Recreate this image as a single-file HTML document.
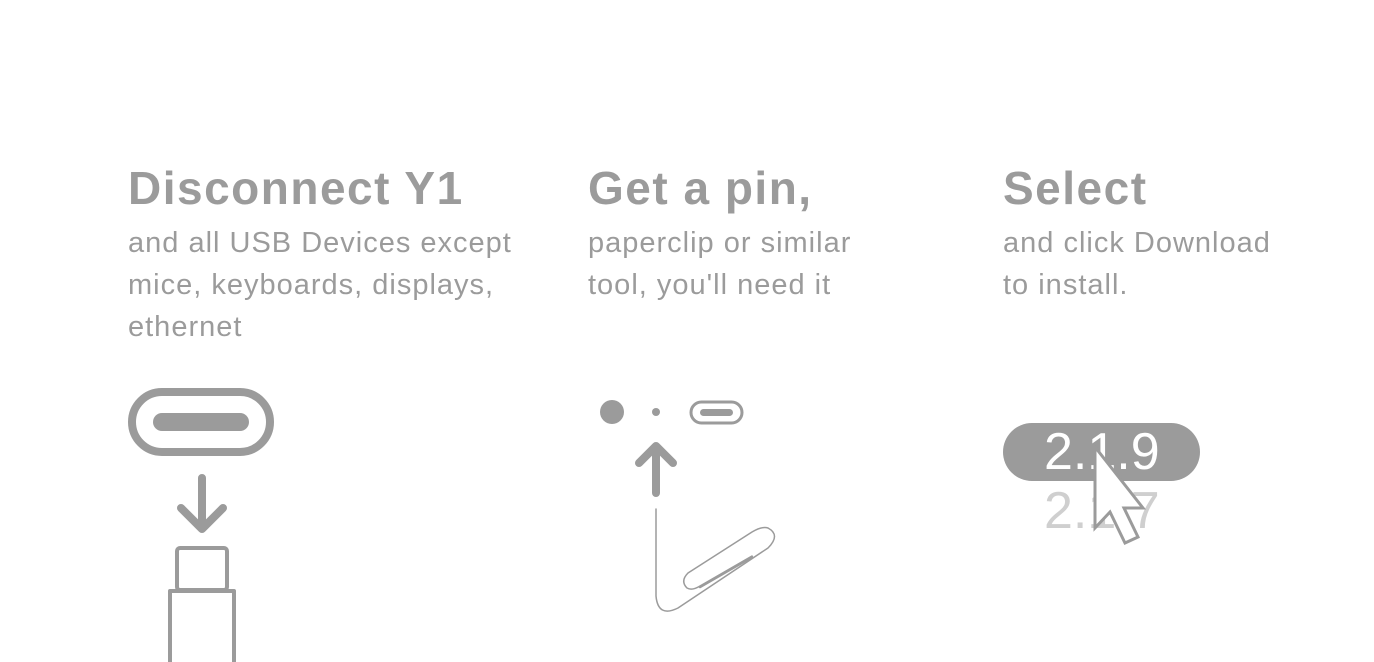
<!DOCTYPE html>
<html><head><style>
html,body{margin:0;padding:0;background:#fff;width:1374px;height:662px;overflow:hidden;font-family:"Liberation Sans",sans-serif;color:#9b9b9b}
.c{position:absolute;top:158px}
h2{margin:0;font-size:46px;font-weight:bold;line-height:60px;letter-spacing:1.5px}
p{margin:0;padding-top:4px;font-size:29px;line-height:42px;letter-spacing:1px}
svg{position:absolute;left:0;top:0}
</style></head><body>
<div class="c" style="left:128px"><h2>Disconnect Y1</h2><p>and all USB Devices except<br>mice, keyboards, displays,<br>ethernet</p></div>
<div class="c" style="left:588px"><h2>Get a pin,</h2><p>paperclip or similar<br>tool, you'll need it</p></div>
<div class="c" style="left:1003px"><h2>Select</h2><p>and click Download<br>to install.</p></div>
<svg width="1374" height="662" viewBox="0 0 1374 662">
<g stroke="#9b9b9b" fill="none" stroke-linecap="round" stroke-linejoin="round">
<rect x="132" y="392" width="138" height="60" rx="30" stroke-width="8"/>
<rect x="153" y="413" width="96" height="18" rx="9" fill="#9b9b9b" stroke="none"/>
<path d="M202 478V528M181 508L202 529L223 508" stroke-width="8"/>
<rect x="177" y="548" width="50" height="42" rx="3" stroke-width="4"/>
<path d="M170 662V591H234V662" stroke-width="4" stroke-linecap="butt"/>
<circle cx="612" cy="412" r="12" fill="#9b9b9b" stroke="none"/>
<circle cx="656" cy="412" r="4" fill="#9b9b9b" stroke="none"/>
<rect x="691" y="402" width="51" height="21" rx="10.5" stroke-width="3"/>
<rect x="700" y="409" width="33" height="7" rx="3.5" fill="#9b9b9b" stroke="none"/>
<path d="M656 493V448M639 463L656 446L673 463" stroke-width="8"/>
<path d="M656 509V596Q658 618 678 608L768 548Q781 535 768 528Q762 526 752 532L688 573Q680 581 687 588Q692 591 700 586L752 556" stroke-width="1.5"/>
<path d="M700 587L752 557" stroke-width="2.5"/>
</g>
<rect x="1003" y="423" width="197" height="58" rx="29" fill="#9b9b9b"/>
<text x="1044" y="469" font-family="Liberation Sans" font-size="52" fill="#fff">2.1.9</text>
<text x="1044" y="528" font-family="Liberation Sans" font-size="52" fill="#cfcfcf">2.1.7</text>
<path d="M1095 447V528L1110 512L1125 543L1138 537L1124 508H1143Z" fill="#fff" stroke="#9b9b9b" stroke-width="3"/>
</svg>
</body></html>
